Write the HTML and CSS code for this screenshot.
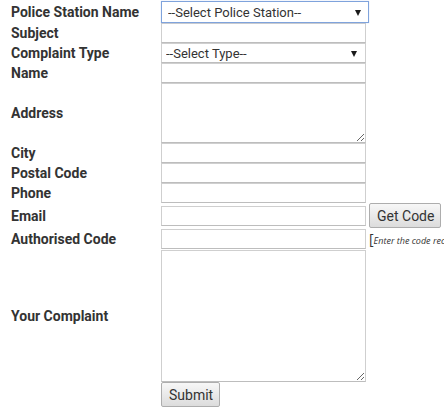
FILE: index.html
```html
<!DOCTYPE html>
<html>
<head>
<meta charset="utf-8">
<link rel="stylesheet" href="styles.css">
</head>
<body>
<form class="complaint-form">
  <label class="lbl">Police Station Name</label>
  <div class="field"><div class="select-wrap wide"><select class="sel sel-focus"><option>--Select Police Station--</option></select></div></div>

  <label class="lbl">Subject</label>
  <div class="field"><input class="txt" type="text"></div>

  <label class="lbl">Complaint Type</label>
  <div class="field"><div class="select-wrap"><select class="sel"><option>--Select Type--</option></select></div></div>

  <label class="lbl">Name</label>
  <div class="field"><input class="txt" type="text"></div>

  <label class="lbl">Address</label>
  <div class="field"><textarea class="area area-short"></textarea></div>

  <label class="lbl">City</label>
  <div class="field"><input class="txt" type="text"></div>

  <label class="lbl">Postal Code</label>
  <div class="field"><input class="txt" type="text"></div>

  <label class="lbl">Phone</label>
  <div class="field"><input class="txt" type="text"></div>

  <label class="lbl">Email</label>
  <div class="field field-row"><input class="txt" type="text"><button type="button" class="btn btn-code">Get Code</button></div>

  <label class="lbl">Authorised Code</label>
  <div class="field field-row field-auth"><input class="txt" type="text"><span class="hint"><span class="bracket">[</span><em>Enter the code rec</em></span></div>

  <label class="lbl">Your Complaint</label>
  <div class="field"><textarea class="area area-tall"></textarea></div>

  <span class="lbl"></span>
  <div class="field"><button type="button" class="btn btn-submit">Submit</button></div>
</form>
</body>
</html>
```

FILE: styles.css
```css
html, body {
  margin: 0;
  padding: 0;
  overflow: hidden;
  background: #fff;
}

.complaint-form {
  display: grid;
  grid-template-columns: 161px auto;
  align-items: center;
  padding-top: 1px;
  font-family: Roboto, "Liberation Sans", sans-serif;
  color: #333;
}

.lbl {
  padding-left: 11px;
  font-size: 14px;
  font-weight: bold;
  color: #333;
  line-height: 16px;
}

.field {
  display: flex;
  align-items: center;
  white-space: nowrap;
  line-height: 0;
}

.field-row {
  gap: 3px;
}

.field-auth {
  align-items: flex-start;
  padding-top: 1px;
}

.txt {
  box-sizing: border-box;
  width: 205px;
  height: 20px;
  margin: 0;
  padding: 0 4px;
  border: 1px solid #cfcfcf;
  border-bottom-color: #bdbdbd;
  background: #fff;
  font: 13px Roboto, sans-serif;
}

.area {
  box-sizing: border-box;
  width: 205px;
  margin: 0;
  padding: 2px 4px;
  border: 1px solid #cfcfcf;
  border-bottom-color: #bdbdbd;
  background: #fff;
  font: 13px Roboto, sans-serif;
  display: block;
}

.area-short { height: 60px; }
.area-tall { height: 132px; }

.select-wrap {
  position: relative;
  width: 205px;
}

.select-wrap.wide { width: 208px; }

.select-wrap::after {
  content: "";
  position: absolute;
  right: 9px;
  top: 8px;
  border-left: 3px solid transparent;
  border-right: 3px solid transparent;
  border-top: 6px solid #1a1a1a;
  pointer-events: none;
}

.select-wrap.wide::after {
  right: 8px;
  top: 9px;
}

.sel {
  appearance: none;
  -webkit-appearance: none;
  box-sizing: border-box;
  display: block;
  width: 100%;
  height: 20px;
  margin: 0;
  padding: 0 4px;
  border: 1px solid #cfcfcf;
  border-bottom-color: #bdbdbd;
  border-radius: 0;
  background: #fff;
  font: 13px Roboto, sans-serif;
  color: #333;
}

.sel-focus {
  height: 22px;
  padding-left: 6px;
  border: 1px solid #7fa3dc;
  box-shadow: 0 0 1px rgba(90, 140, 220, 0.4);
}

.btn {
  box-sizing: border-box;
  height: 25px;
  margin: 0;
  padding: 0 7px;
  border: 1px solid #adadad;
  border-radius: 2px;
  background: linear-gradient(#f7f7f7, #dcdcdc);
  font: 14px Roboto, sans-serif;
  color: #333;
}

.btn-code { width: 72px; }
.btn-submit { width: 59px; }

.hint {
  font-family: "Open Sans", "DejaVu Sans", sans-serif;
  color: #333;
  line-height: 18px;
}

.hint em {
  font-size: 9px;
  font-style: italic;
}

.bracket {
  font-size: 14px;
}
```
